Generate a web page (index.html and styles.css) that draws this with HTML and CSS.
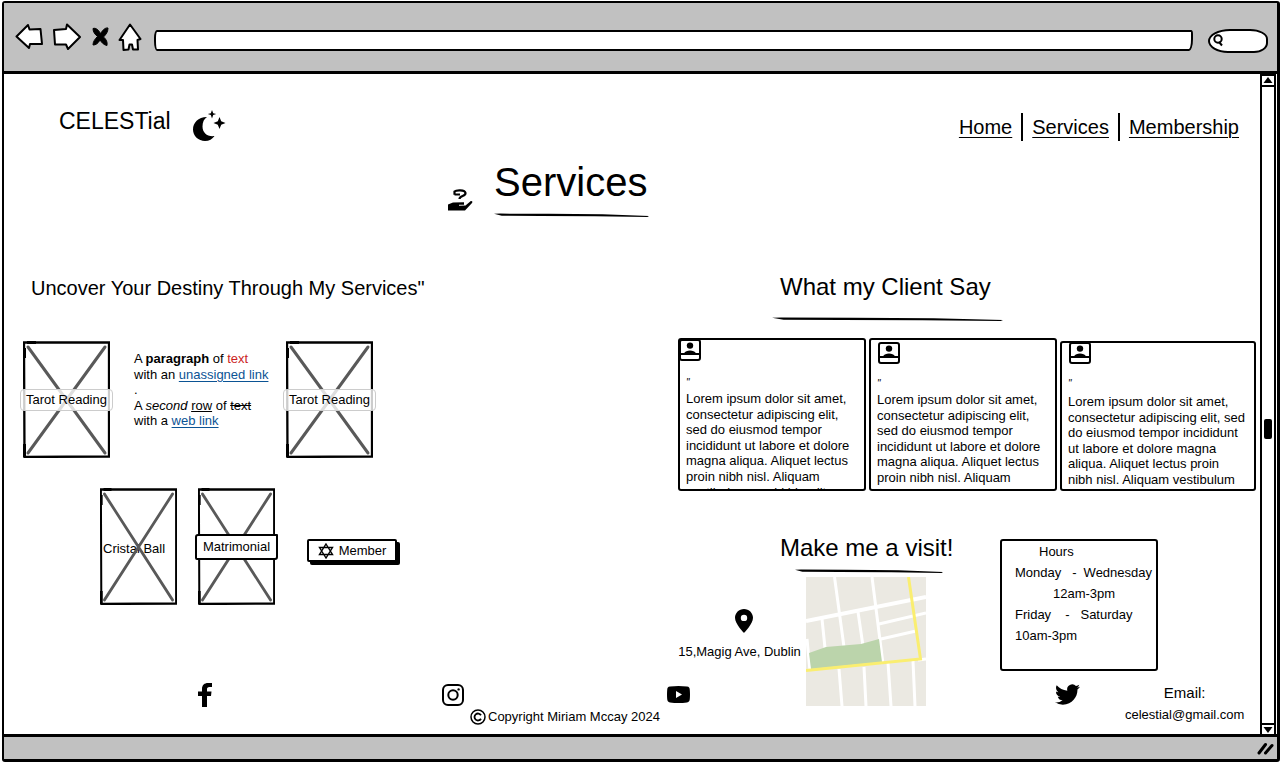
FILE: index.html
```html
<!DOCTYPE html>
<html lang="en">
<head>
<meta charset="utf-8">
<title>CELESTial - Services</title>
<link rel="stylesheet" href="styles.css">
</head>
<body>
<svg class="defs" width="0" height="0" aria-hidden="true">
  <symbol id="avatar" viewBox="0 0 22 22">
    <rect x="1" y="1" width="20" height="20" rx="2" fill="#fff" stroke="#000" stroke-width="2"/>
    <circle cx="11" cy="6.600" r="3.200"/>
    <path d="M5 14.500C6 12.200 8.500 11.500 11 11.500S16 12.200 17 14.500Z"/>
    <path d="M1 15h20" stroke="#000" stroke-width="2"/>
  </symbol>
  <symbol id="placeholder" viewBox="0 0 87 117" preserveAspectRatio="none">
    <path d="M5 6 82 112M82 6 5 112" stroke="#595959" stroke-width="3" stroke-linecap="round"/>
    <path d="M1 1.500H86V115.500L1.500 116Z" fill="none" stroke="#000" stroke-width="2.300"/>
    <path d="M1.500 7V17M1.500 103V116M4 1.500H13" stroke="#000" stroke-width="3"/>
  </symbol>
  <symbol id="rule" viewBox="0 0 200 5" preserveAspectRatio="none">
    <path d="M0 .8 8 .6 70 .8 140 1.300 200 3 198 4 130 3.200 60 3 10 2.800Z"/>
  </symbol>
</svg>
<div class="window">
  <div class="toolbar">
    <div class="tools">
      <button class="tool" aria-label="Back"><svg width="28" height="27" viewBox="0 0 28 27"><path d="M1.500 13.500 13 2l1.500 4.500 11-.5L27 21l-12 0-1 4Z"/></svg></button>
      <button class="tool forward" aria-label="Forward"><svg width="29" height="27" viewBox="0 0 29 27"><path d="M2 7 14 6l1-4.500L28 14 16 26l-2-4.500-11 0Z"/></svg></button>
      <button class="tool stop" aria-label="Stop"><svg width="17" height="20" viewBox="0 0 17 20"><path class="solid" d="M1 1.500C4 .5 6.500 3 8.500 6.500 11 3 13 .5 16 1 16 5 14 7.500 11.500 10c3 2.500 4 5 3.500 8.500-3-.5-5-2.500-7-5.500-2 3.500-4 5-7 5 0-3.500 2-6 4.500-8.500C3 7.500 1 5 1 1.500Z"/></svg></button>
      <button class="tool" aria-label="Home"><svg width="24" height="28" viewBox="0 0 24 28"><path d="M12 1.500 22.500 16l-3 1L20 26.500h-5l-1-5-2.500 0-1 5-5 .5L5 17l-3.500 0Z"/></svg></button>
    </div>
    <input class="address" type="text" aria-label="Address">
    <label class="search"><svg width="12" height="13" viewBox="0 0 12 13"><circle cx="6" cy="5" r="3.700"/><path d="M7 8l3 3.500"/></svg><input type="search" aria-label="Search"></label>
  </div>
  <div class="viewport">
    <div class="page">
      <header class="site-header">
        <div class="logo"><span>CELESTial</span>
          <svg width="33" height="32" viewBox="0 0 33 32"><path d="M14 7C5 7 0 13 0 19.500S5.500 31 12 31c4 0 7.500-2 9.500-5-7 1-12-3-12-9.500C9.500 12 11 9 14 7ZM19 0l1.200 3.200 3 .8-3 1L19 8.500 17.800 5l-3-1 3-.8ZM26.500 7l1.700 4.300 4.300 1.700-4.300 1.700-1.700 4.300-1.700-4.300L20.500 13l4.300-1.700Z"/></svg></div>
        <nav class="nav"><a href="#">Home</a><a href="#">Services</a><a href="#">Membership</a></nav>
      </header>
      <div class="hero">
        <div class="hero-title">
          <svg class="hand" width="25" height="22" viewBox="0 0 25 22"><path d="M6.500 5.800V2.500C8 1 17 .4 17.500 4c.4 3.500-6 2.500-6 6M6.500 5.500h5.500" fill="none" stroke="#000" stroke-width="2.200"/><path d="M0 15.500 5 13.500 16 13.200v2.600h-5v1l6.500-.3 5-4.300c1.500-.5 2.500.6 1.500 1.800L17 21.500H0Z"/></svg>
          <div class="titled"><h1>Services</h1><svg class="rule"><use href="#rule"/></svg></div>
        </div>
      </div>
      <main class="columns">
        <section class="services">
          <h2>Uncover Your Destiny Through My Services"</h2>
          <div class="tiles">
            <div class="tile"><svg><use href="#placeholder"/></svg><button class="tag soft">Tarot Reading</button></div>
            <div class="copy">
              <p>A <b>paragraph</b> of <span class="red">text</span><br>with an <a href="#">unassigned link</a></p>
              <p>.</p>
              <p>A <i>second</i> <u>row</u> of <s>text</s><br>with a <a href="#">web link</a></p>
            </div>
            <div class="tile"><svg><use href="#placeholder"/></svg><button class="tag soft">Tarot Reading</button></div>
          </div>
          <div class="tiles second">
            <div class="tile small"><span class="caption">Cristal Ball</span><svg><use href="#placeholder"/></svg></div>
            <div class="tile small"><svg><use href="#placeholder"/></svg><button class="tag boxed">Matrimonial</button></div>
            <button class="member"><svg width="16" height="16" viewBox="0 0 16 16"><path d="M8 1l6.500 10.500h-13ZM8 15 1.500 4.500h13Z" fill="none" stroke="#000" stroke-width="1.400"/></svg>Member</button>
          </div>
        </section>
        <div class="side">
          <section class="clients">
            <h2>What my Client Say</h2>
            <svg class="rule"><use href="#rule"/></svg>
            <div class="quotes">
              <article class="quote flush"><svg class="avatar"><use href="#avatar"/></svg><span class="mark">"</span><p>Lorem ipsum dolor sit amet, consectetur adipiscing elit, sed do eiusmod tempor incididunt ut labore et dolore magna aliqua. Aliquet lectus proin nibh nisl. Aliquam vestibulum morbi blandit.</p></article>
              <article class="quote"><svg class="avatar"><use href="#avatar"/></svg><span class="mark">"</span><p>Lorem ipsum dolor sit amet, consectetur adipiscing elit, sed do eiusmod tempor incididunt ut labore et dolore magna aliqua. Aliquet lectus proin nibh nisl. Aliquam vestibulum morbi blandit.</p></article>
              <article class="quote wide"><svg class="avatar"><use href="#avatar"/></svg><span class="mark">"</span><p>Lorem ipsum dolor sit amet, consectetur adipiscing elit, sed do eiusmod tempor incididunt ut labore et dolore magna aliqua. Aliquet lectus proin<br>nibh nisl. Aliquam vestibulum</p></article>
            </div>
          </section>
          <section class="visit">
            <div class="place">
              <h2>Make me a visit!</h2>
              <svg class="rule"><use href="#rule"/></svg>
              <div class="where">
                <address><svg width="18" height="24" viewBox="0 0 18 24"><path fill-rule="evenodd" d="M9 0C4 0 0 4 0 8.800 0 15 9 24 9 24s9-9 9-15.200C18 4 14 0 9 0Zm0 5.700a3.200 3.200 0 1 1 0 6.400 3.200 3.200 0 0 1 0-6.400Z"/></svg><span>15,Magig Ave, Dublin</span></address>
                <svg class="map" width="120" height="129" viewBox="0 0 120 129" role="img" aria-label="Map">
                  <rect width="120" height="129" fill="#ebe9e2"/>
                  <g fill="none" stroke="#fff" stroke-width="3">
                    <path d="M0 44 120 20" stroke-width="4"/>
                    <path d="M28.500 0 38 70M66 0 77 87M16 42l3 29M52 35l5 34M73 47 120 36M75 62l35-8M1 62l3 32M33 92l3 37M58 90l2 39M82 86l3 43M107 84l2 45M112 83l8-1"/>
                  </g>
                  <path d="M3 76l17-6 35-3 18-5 3 23-71 7Z" fill="#bbd4ab"/>
                  <path d="M102.500 0 114.500 82 0 93.500" fill="none" stroke="#faee70" stroke-width="3"/>
                </svg>
              </div>
            </div>
            <div class="hours">
              <p class="in-1">Hours</p>
              <p><span>Monday</span><span class="dash">-</span><span>Wednesday</span></p>
              <p class="in-2">12am-3pm</p>
              <p><span>Friday</span><span class="dash wide-dash">-</span><span>Saturday</span></p>
              <p>10am-3pm</p>
            </div>
          </section>
        </div>
      </main>
      <footer class="footer">
        <a class="fb" href="#" aria-label="Facebook"><svg width="14" height="24" viewBox="0 0 14 24"><path d="M4 24V13H0V8.500h4V6C4 2 6.500 0 10 0h4v4h-2.500C9.500 4 9 5 9 6.200v2.300h4.500L13 13H9v11Z"/></svg></a>
        <a class="ig" href="#" aria-label="Instagram"><svg width="22" height="22" viewBox="0 0 22 22" fill="none" stroke="#000" stroke-width="2"><rect x="1" y="1" width="20" height="20" rx="5"/><circle cx="11" cy="11" r="4.700"/><circle cx="16.600" cy="5.400" r="1.200" fill="#000" stroke="none"/></svg></a>
        <a class="yt" href="#" aria-label="YouTube"><svg width="23" height="17" viewBox="0 0 23 17"><path fill-rule="evenodd" d="M3 .6Q11.500-.5 20 .6C22 .8 22.700 2 22.800 4q.4 4.500 0 9c-.1 2-.8 3.200-2.800 3.400q-8.500 1-17 0C1 16.200.3 15 .2 13q-.4-4.500 0-9C.3 2 1 .8 3 .6ZM9 5v7l6-3.500Z"/></svg></a>
        <a class="tw" href="#" aria-label="Twitter"><svg width="25" height="25" viewBox="0 0 24 24"><path d="M23.953 4.570a10 10 0 01-2.825.775 4.958 4.958 0 002.163-2.723c-.951.555-2.005.959-3.127 1.184a4.920 4.920 0 00-8.384 4.482C7.690 8.095 4.067 6.130 1.640 3.162a4.822 4.822 0 00-.666 2.475c0 1.710.87 3.213 2.188 4.096a4.904 4.904 0 01-2.228-.616v.06a4.923 4.923 0 003.946 4.827 4.996 4.996 0 01-2.212.085 4.936 4.936 0 004.604 3.417 9.867 9.867 0 01-6.102 2.105c-.39 0-.779-.023-1.170-.067a13.995 13.995 0 007.557 2.209c9.053 0 13.998-7.496 13.998-13.985 0-.21 0-.42-.015-.63A9.935 9.935 0 0024 4.590z"/></svg></a>
        <div class="email"><span>Email:</span><span class="mail">celestial@gmail.com</span></div>
        <div class="copyright"><svg width="16" height="16" viewBox="0 0 16 16" fill="none" stroke="#000" stroke-width="1.500"><circle cx="8" cy="8" r="7"/><path d="M11 6.200a3.500 3.500 0 1 0 0 3.600" stroke-width="1.800"/></svg><span>Copyright Miriam Mccay 2024</span></div>
      </footer>
    </div>
    <div class="scrollbar" aria-hidden="true">
      <svg class="end" width="12" height="9" viewBox="0 0 12 9"><path d="M6 1 10.500 7h-9Z"/></svg>
      <div class="thumb"></div>
      <svg class="end" width="12" height="9" viewBox="0 0 12 9"><path d="M6 8 10.500 2h-9Z"/></svg>
    </div>
  </div>
  <div class="statusbar"><svg width="17" height="13" viewBox="0 0 17 13"><path d="M2 11 8.500 2.500M8.500 11 15 3.500" stroke="#000" stroke-width="3" stroke-linecap="round"/></svg></div>
</div>
</body>
</html>
```

FILE: styles.css
```css
* { box-sizing: border-box; }
body {
  margin: 0;
  font-family: "Liberation Sans", Arial, sans-serif;
  font-size: 13px;
  line-height: 1.2;
  color: #000;
  background: #fff;
}
h1, h2, p { margin: 0; font-weight: 400; }
button, input { font: inherit; color: inherit; }
svg { display: block; flex: none; }
.defs { position: absolute; }

.window {
  display: flex;
  flex-direction: column;
  min-height: calc(100vh - 2px);
  margin: 1px 0 1px 2px;
  border: 3px solid #000;
  border-width: 2px 3px 3px 2px;
  border-radius: 3px;
}
.toolbar {
  display: flex;
  align-items: center;
  height: 71px;
  padding: 0 9px 0 11px;
  background: #c1c1c1;
  border-bottom: 3px solid #000;
}
.tools { display: flex; align-items: center; gap: 9px; margin-bottom: 1px; }
.tool { padding: 0; border: 0; background: none; }
.tool path { fill: #fff; stroke: #000; stroke-width: 2; stroke-linejoin: round; }
.tool .solid { fill: #000; stroke-width: 1; }
.tool.stop { margin-left: 2px; }
.address {
  flex: 1;
  min-width: 0;
  height: 21px;
  margin: 7px 15px 0 12px;
  border: 2px solid #000;
  border-radius: 3px 2px 4px 3px / 8px 4px 12px 10px;
  background: #fff;
}
.search {
  display: flex;
  align-items: center;
  width: 60px;
  height: 24px;
  margin-top: 7px;
  padding-left: 2px;
  border: 2px solid #000;
  border-radius: 22px 18px 14px 20px / 12px 10px 10px 12px;
  background: #fff;
}
.search svg { fill: none; stroke: #000; stroke-width: 2; }
.search input { width: 36px; padding: 0; border: 0; background: none; }

.viewport { display: flex; flex: 1; }
.page { flex: 1; min-width: 0; }
.scrollbar {
  display: flex;
  flex-direction: column;
  align-items: center;
  justify-content: space-between;
  width: 16px;
  margin-right: 1px;
  border: 2px solid #000;
  border-bottom-width: 0;
}
.scrollbar .end { width: 12px; height: 11px; border-bottom: 2px solid #000; }
.scrollbar .end:last-child { border-bottom: 0; border-top: 2px solid #000; }
.thumb { width: 8px; height: 20px; margin-top: 48px; border-radius: 2px; background: #000; }
.statusbar {
  display: flex;
  align-items: center;
  justify-content: flex-end;
  height: 25px;
  padding-right: 3px;
  background: #c1c1c1;
  border-top: 3px solid #000;
}

.site-header {
  display: flex;
  justify-content: space-between;
  align-items: flex-start;
  padding: 35px 21px 0 55px;
}
.logo { display: flex; gap: 22px; font-size: 23px; line-height: 24px; }
.logo svg { margin-top: 1px; }
.nav { display: flex; margin-top: 4px; font-size: 20px; line-height: 28px; }
.nav a { color: inherit; text-underline-offset: 3px; text-decoration-thickness: 1px; }
.nav a + a { margin-left: 9px; padding-left: 9px; border-left: 2px solid #000; }

.hero { display: grid; grid-template-columns: 444fr 812fr; margin-top: 16px; }
.hero-title { grid-column: 2; display: flex; gap: 21px; align-items: flex-end; }
.hero h1 { font-size: 40px; line-height: 48px; }
.titled { display: grid; grid-template-columns: 155px; }
.hand { margin-bottom: 7px; }
.rule { width: 100%; height: 5px; }
.hero .rule { margin-top: 7px; }

h2 { font-size: 24px; line-height: 24px; white-space: nowrap; }
.columns { display: grid; grid-template-columns: 674fr 582fr; margin-top: 57px; }
.services h2 { padding: 1px 0 0 27px; font-size: 20px; }
.tiles { display: flex; gap: 24px; margin-top: 41px; padding-left: 19px; }
.tiles.second { gap: 21px; margin-top: 30px; padding-left: 96px; }
.tile {
  display: grid;
  grid-template-columns: 100%;
  place-items: center;
  width: 87px;
  height: 117px;
}
.tile > * { grid-area: 1 / 1; }
.tile > svg { width: 100%; height: 100%; }
.tile.small { width: 77px; }
.tag {
  justify-self: center;
  padding: 0;
  white-space: nowrap;
}
.tag.soft {
  width: 93px;
  height: 22px;
  border: 1px solid #ccc;
  border-radius: 4px;
  background: rgba(255, 255, 255, .8);
}
.tag.boxed {
  width: 83px;
  height: 26px;
  border: 2px solid #000;
  border-radius: 3px 1px 3px 2px;
  background: #fff;
}
.caption { justify-self: start; padding: 0 0 0 3px; margin-top: 4px; white-space: nowrap; }
.copy { width: 152px; margin-right: -24px; padding-top: 10px; white-space: nowrap; }
.copy a { color: #0b5394; text-underline-offset: 2px; }
.copy .red { color: #cc1f1f; }
.member {
  display: flex;
  align-items: center;
  justify-content: center;
  gap: 5px;
  align-self: center;
  width: 90px;
  height: 23px;
  margin: 8px 0 0 11px;
  padding: 0;
  border: 2px solid #000;
  border-radius: 2px;
  background: #fff;
  box-shadow: 3px 3px 0 #000;
}

.clients h2 { padding-left: 102px; }
.clients .rule { width: 231px; margin: 18px 0 0 94px; }
.quotes {
  display: grid;
  grid-template-columns: 188fr 188fr 196fr;
  gap: 3px;
  margin-top: 16px;
  padding-right: 4px;
}
.quote {
  height: 153px;
  padding: 4px 10px 0 8px;
  overflow: hidden;
  border-radius: 3px;
  box-shadow: inset 0 0 0 2px #000;
}
.quote.flush { padding-top: 1px; }
.quote.flush .avatar { margin-left: -7px; }
.quote.flush .mark { margin-top: 16px; }
.quote.wide { height: 150px; margin-top: 3px; padding: 1px 4px 0 8px; }
.avatar { width: 22px; height: 22px; }
.quote .avatar { margin-left: 1px; }
.mark { display: block; margin-top: 14px; font-size: 10px; font-style: italic; line-height: 12px; }
.quote p { margin-top: 2px; }
.quote.wide p { margin-top: 4px; }

.visit { display: flex; margin-top: 45px; }
.place { width: 275px; }
.visit h2 { padding-left: 102px; }
.visit .rule { width: 148px; margin: 9px 0 0 117px; }
.where { display: flex; gap: 7px; margin-top: 3px; padding-left: 2px; }
address {
  display: flex;
  flex-direction: column;
  align-items: center;
  gap: 11px;
  width: 119px;
  padding-top: 32px;
  font-style: normal;
  white-space: nowrap;
}
address svg { margin-left: 9px; }
.hours {
  width: 158px;
  height: 132px;
  margin: 3px 0 0 47px;
  padding-left: 13px;
  border: 2px solid #000;
  border-radius: 3px;
  line-height: 21px;
  white-space: nowrap;
}
.hours .in-1 { padding-left: 24px; }
.hours .in-2 { padding-left: 38px; }
.dash { margin: 0 7px 0 11px; }
.wide-dash { margin: 0 11px 0 14px; }

.footer {
  display: grid;
  grid-template-columns: 194fr 244fr 225fr 388fr 70fr 135fr;
  grid-template-rows: 25px 18px;
  margin-top: -24px;
  padding-bottom: 9px;
}
.footer a { display: flex; align-items: center; justify-self: start; }
.fb { grid-column: 2; }
.ig { grid-column: 3; }
.yt { grid-column: 4; }
.tw { grid-column: 5; }
.email {
  grid-column: 6;
  grid-row: 1 / 3;
  display: flex;
  flex-direction: column;
  justify-self: start;
  align-items: center;
  font-size: 15px;
  line-height: 22px;
}
.mail { font-size: 13px; }
.copyright {
  grid-column: 3 / 5;
  grid-row: 2;
  display: flex;
  align-items: center;
  gap: 2px;
  padding: 0 0 0 28px;
  margin-top: 1px;
}
```
